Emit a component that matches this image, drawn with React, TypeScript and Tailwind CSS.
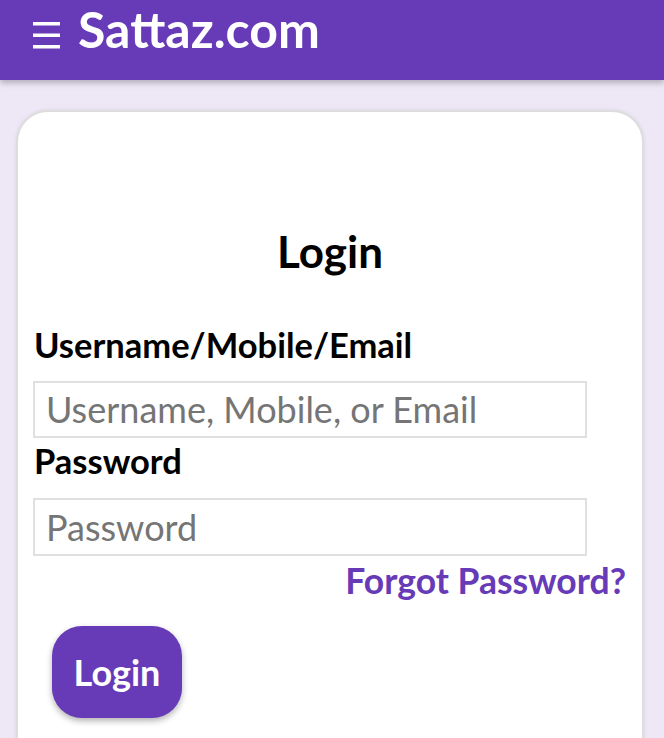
import React from "react";

export default function App() {
  const font = { fontFamily: '"Lato", "Open Sans", sans-serif' };
  return (
    <div className="min-h-[738px] bg-[#ede7f6] overflow-hidden" style={font}>
      <header className="h-[80px] bg-[#673ab7] flex items-start pl-[33px] pt-[4px] shadow-[0_3px_6px_rgba(0,0,0,0.25)] relative z-10">
        <svg width="27" height="27" viewBox="0 0 27 27" className="mt-[18px] mr-[18px]" aria-hidden="true">
          <rect x="0" y="0" width="27" height="3.5" fill="#fff" />
          <rect x="0" y="11.5" width="27" height="3.5" fill="#fff" />
          <rect x="0" y="23" width="27" height="3.5" fill="#fff" />
        </svg>
        <span className="text-white text-[50px] leading-none font-bold">Sattaz.com</span>
      </header>
      <main className="pl-[16px] pr-[20px] pt-[30px]">
        <div className="bg-white rounded-[32px] border-2 border-[#ddd] shadow-[0_0_4px_rgba(0,0,0,0.08)] px-[16px] pt-[117px] pb-[40px] min-h-[700px]">
          <h1 className="text-center text-[44px] leading-none font-bold text-black mb-[55px]">Login</h1>
          <label className="block text-[34.5px] leading-none font-bold text-black mb-[18px]">Username/Mobile/Email</label>
          <input
            className="block w-[554px] h-[57px] -ml-[1px] border-2 border-[#e0e0e0] px-[11px] text-[36px] text-black placeholder:text-[#757575] outline-none"
            placeholder="Username, Mobile, or Email"
          />
          <label className="block text-[34.5px] leading-none font-bold text-black mt-[6px] mb-[20px]">Password</label>
          <input
            type="password"
            className="block w-[554px] h-[58px] -ml-[1px] border-2 border-[#e0e0e0] px-[11px] text-[36px] text-black placeholder:text-[#757575] outline-none"
            placeholder="Password"
          />
          <div className="text-right mt-[7px] leading-none">
            <a className="text-[35.5px] font-bold text-[#673ab7] leading-none">Forgot Password?</a>
          </div>
          <button className="block mt-[27px] ml-[18px] w-[130px] h-[92px] rounded-[30px] bg-[#673ab7] text-white text-[36px] leading-none font-bold shadow-[0_3px_6px_rgba(0,0,0,0.3)]">
            Login
          </button>
        </div>
      </main>
    </div>
  );
}
